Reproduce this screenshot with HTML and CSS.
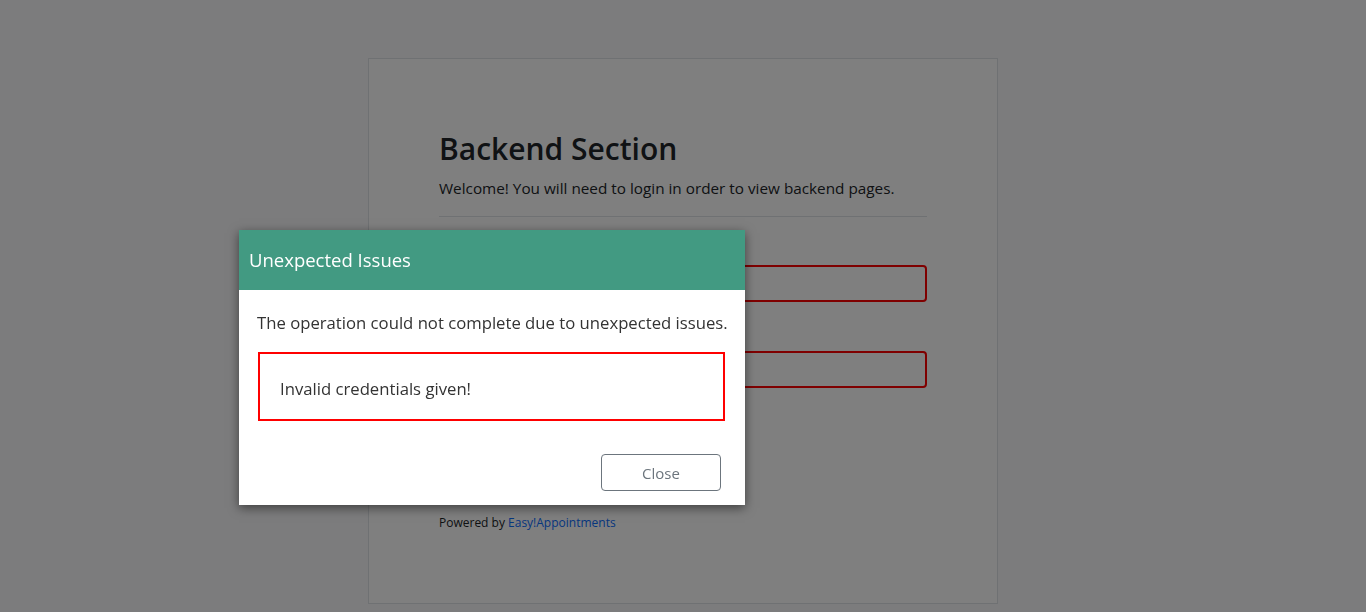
FILE: index.html
```html
<!DOCTYPE html>
<html lang="en">
<head>
<meta charset="utf-8">
<title>Backend Section</title>
<link rel="stylesheet" href="styles.css">
</head>
<body>
<main class="login-frame">
  <h2 class="title">Backend Section</h2>
  <p class="intro">Welcome! You will need to login in order to view backend pages.</p>
  <hr class="divider">
  <form class="login-form">
    <input class="field-input invalid" type="text" aria-label="Username">
    <input class="field-input invalid" type="password" aria-label="Password">
    <div class="actions">
      <button type="button" class="btn-login" aria-label="Login"></button>
    </div>
  </form>
  <p class="powered">Powered by <a href="#" class="brand">Easy!Appointments</a></p>
</main>

<div class="backdrop"></div>

<div class="modal">
  <div class="modal-header">
    <h3 class="modal-title">Unexpected Issues</h3>
  </div>
  <div class="modal-body">
    <p class="modal-text">The operation could not complete due to unexpected issues.</p>
    <div class="error-box">Invalid credentials given!</div>
  </div>
  <div class="modal-footer">
    <button type="button" class="btn-close">Close</button>
  </div>
</div>
</body>
</html>
```

FILE: styles.css
```css
* {
  box-sizing: border-box;
}

html, body {
  margin: 0;
  padding: 0;
  height: 100%;
  overflow: hidden;
}

body {
  background: #f8f9fa;
  font-family: "Open Sans", "Noto Sans", sans-serif;
  color: #212529;
  padding-top: 58px;
}

.login-frame {
  width: 630px;
  height: 546px;
  margin: 0 auto;
  background: #ffffff;
  border: 1px solid #dee2e6;
  padding: 70px 70px 0 70px;
  display: flex;
  flex-direction: column;
}

.title {
  margin: 0;
  font-size: 30px;
  font-weight: 600;
  line-height: 40px;
  color: #212529;
}

.intro {
  margin: 7px 0 0 0;
  font-size: 15.3px;
  line-height: 24px;
}

.divider {
  margin: 16px 0 0 0;
  border: 0;
  border-top: 1px solid #dee2e6;
}

.login-form {
  display: flex;
  flex-direction: column;
  margin-top: 48px;
  gap: 49px;
}

.field-input {
  height: 37px;
  border: 2px solid #ff0000;
  border-radius: 4px;
  font: inherit;
}

.actions {
  display: flex;
  margin-top: -10px;
}

.btn-login {
  width: 80px;
  height: 38px;
  border: 0;
  border-radius: 4px;
  background: #429a82;
}

.powered {
  margin: 50px 0 0 0;
  font-size: 12px;
  line-height: 16px;
}

.brand {
  color: #0d6efd;
  text-decoration: none;
}

.backdrop {
  position: fixed;
  inset: 0;
  background: rgba(0, 0, 0, 0.5);
}

.modal {
  position: absolute;
  left: 239px;
  top: 230px;
  width: 506px;
  height: 275px;
  background: #ffffff;
  box-shadow: 0 3px 10px rgba(0, 0, 0, 0.5);
  display: flex;
  flex-direction: column;
}

.modal-header {
  flex-shrink: 0;
  height: 60px;
  background: #429a82;
  display: flex;
  align-items: center;
  padding-left: 10px;
}

.modal-title {
  margin: 0;
  color: #ffffff;
  font-size: 18.5px;
  font-weight: 400;
  line-height: 26px;
}

.modal-body {
  flex-shrink: 0;
  padding: 21px 20px 0 19px;
  display: flex;
  flex-direction: column;
}

.modal-text {
  margin: 0 0 0 -1px;
  font-size: 16.7px;
  line-height: 24px;
  color: #333333;
  white-space: nowrap;
}

.error-box {
  margin-top: 17px;
  height: 69px;
  border: 2px solid #ff0000;
  display: flex;
  align-items: center;
  padding-left: 20px;
  font-size: 16.7px;
  color: #333333;
  padding-top: 3px;
}

.modal-footer {
  flex-shrink: 0;
  display: flex;
  justify-content: flex-end;
  padding: 33px 24px 0 0;
}

.btn-close {
  width: 120px;
  height: 37px;
  background: #ffffff;
  border: 1px solid #6c757d;
  border-radius: 4px;
  color: #6c757d;
  font-family: inherit;
  font-size: 15px;
}
```
